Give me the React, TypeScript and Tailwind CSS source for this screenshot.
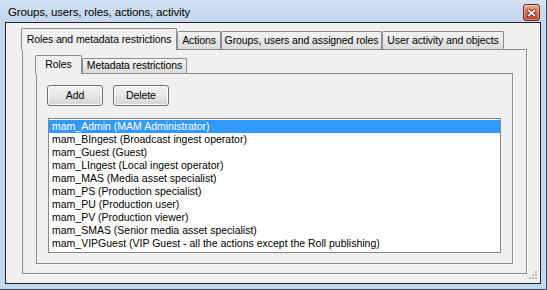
import clsx from 'clsx'

const roles = [
  'mam_Admin (MAM Administrator)',
  'mam_BIngest (Broadcast ingest operator)',
  'mam_Guest (Guest)',
  'mam_LIngest (Local ingest operator)',
  'mam_MAS (Media asset specialist)',
  'mam_PS (Production specialist)',
  'mam_PU (Production user)',
  'mam_PV (Production viewer)',
  'mam_SMAS (Senior media asset specialist)',
  'mam_VIPGuest (VIP Guest - all the actions except the Roll publishing)',
]

function CloseButton() {
  return (
    <button className="ml-auto mt-[1px] w-[17px] h-[17px] rounded-[3px] border border-[#6b2a1c] bg-gradient-to-b from-[#eab0a0] via-[#d36a4b] to-[#c0452a] flex items-center justify-center shadow-[inset_0_0_0_1px_rgba(255,255,255,0.35)]">
      <svg width="9" height="8" viewBox="0 0 9 8">
        <path d="M1.5 1.5 L7.5 6.5 M7.5 1.5 L1.5 6.5" stroke="#5a2014" strokeWidth="3.2" strokeLinecap="square" />
        <path d="M1.5 1.5 L7.5 6.5 M7.5 1.5 L1.5 6.5" stroke="#ffffff" strokeWidth="1.7" strokeLinecap="square" />
      </svg>
    </button>
  )
}

function Tab({ label, active, width, tall }: { label: string; active?: boolean; width: number; tall: number }) {
  return (
    <div
      className={clsx(
        'flex items-center justify-center border-l border-t border-r border-[#898c95] rounded-t-[2px] whitespace-nowrap',
        active ? 'bg-[#f0f0f0] -mb-px relative z-10' : 'bg-gradient-to-b from-[#f3f3f3] to-[#dcdcdc]',
      )}
      style={{ width, height: tall }}
    >
      {label}
    </div>
  )
}

function Button({ label }: { label: string }) {
  return (
    <button className="w-[56px] h-[21px] rounded-[3px] border border-[#707070] bg-gradient-to-b from-[#f2f2f2] via-[#e6e6e6] to-[#d4d4d4] text-black shadow-[inset_0_0_0_1px_#fcfcfc]">
      {label}
    </button>
  )
}

export default function App() {
  return (
    <div className="w-[547px] h-[290px] bg-[#c4d7ed] flex flex-col border-r border-b border-[#3d4c5e] font-['Liberation_Sans',Arial,sans-serif] text-[10.5px] tracking-[-0.1px] text-black overflow-hidden select-none">
      {/* title bar */}
      <div className="h-[22px] flex items-start pt-[3px] pl-[8px] pr-[6px] bg-gradient-to-b from-[#d6e4f3] via-[#c9dbef] to-[#c2d6ec]">
        <span className="text-[11.5px] tracking-[-0.15px] leading-[18px] text-black">Groups, users, roles, actions, activity</span>
        <CloseButton />
      </div>

      {/* client */}
      <div className="flex-1 flex pl-[5px] pr-[5px] pb-[5px]">
        <div className="relative flex-1 border border-[#1f2630] bg-[#f0f0f0] pt-[5px] pl-[16px] flex flex-col">
          <div className="flex items-end h-[21px] -ml-px">
            <Tab label="Roles and metadata restrictions" active width={156} tall={22} />
            <Tab label="Actions" width={44} tall={18} />
            <Tab label="Groups, users and assigned roles" width={161} tall={18} />
            <Tab label="User activity and objects" width={122} tall={18} />
          </div>

          <div className="w-[505px] h-[225px] border border-[#898c95] bg-[#f0f0f0] shadow-[1px_1px_0_#ffffff] pt-[5px] pl-[13px] flex flex-col">
            <div className="flex items-end h-[18px] -ml-px">
              <Tab label="Roles" active width={47} tall={19} />
              <Tab label="Metadata restrictions" width={105} tall={15} />
            </div>

            <div className="w-[477px] h-[191px] border border-[#898c95] bg-[#f0f0f0] shadow-[1px_1px_0_#ffffff] pt-[11px] pl-[10px] flex flex-col">
              <div className="flex gap-[10px]">
                <Button label="Add" />
                <Button label="Delete" />
              </div>

              <div className="mt-[12px] ml-[1px] w-[453px] h-[135px] border border-[#828790] bg-white py-px">
                {roles.map((r, i) => (
                  <div
                    key={r}
                    className={clsx(
                      'h-[13px] leading-[13px] pl-[3px] whitespace-nowrap tracking-normal',
                      i === 0 ? 'bg-[#3399ff] text-white' : 'text-[#000000]',
                    )}
                  >
                    {r}
                  </div>
                ))}
              </div>
            </div>
          </div>

          {/* size grip */}
          <svg className="absolute right-[2px] bottom-[3px]" width="9" height="9" viewBox="0 0 9 9">
            {[
              [6, 0],
              [3, 3],
              [6, 3],
              [0, 6],
              [3, 6],
              [6, 6],
            ].map(([x, y]) => (
              <g key={`${x}-${y}`}>
                <rect x={x + 1} y={y + 1} width="2" height="2" fill="#ffffff" />
                <rect x={x} y={y} width="2" height="2" fill="#b8b8b8" />
              </g>
            ))}
          </svg>
        </div>
      </div>
    </div>
  )
}
